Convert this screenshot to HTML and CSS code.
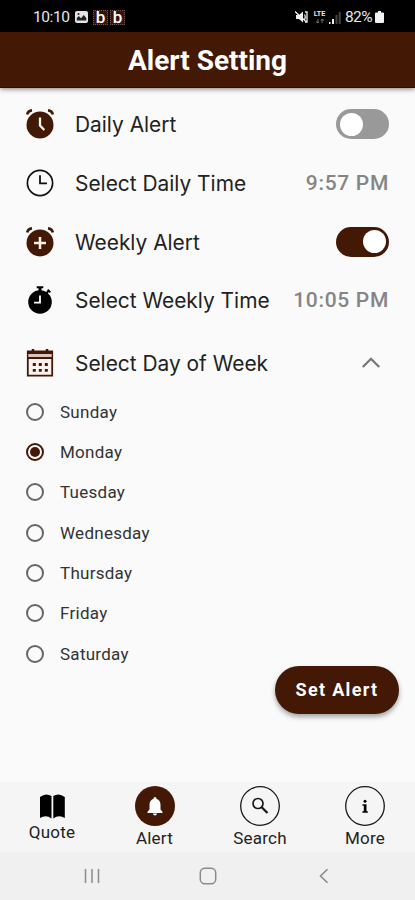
FILE: index.html
```html
<!DOCTYPE html>
<html lang="en">
<head>
<meta charset="utf-8">
<title>Alert Setting</title>
<link rel="stylesheet" href="styles.css">
</head>
<body>
<div class="phone">
  <div class="status">
    <span class="clock">10:10</span>
    <svg class="pic" viewBox="0 0 13 12"><rect width="13" height="12" rx="2" fill="#e4e4e4"/><path d="M1.800 9.500V7l2-2 2.200 2.200L8.800 4l2.500 3v2.500z" fill="#222"/><circle cx="3.500" cy="3" r="1" fill="#222"/></svg>
    <span class="app">b</span><span class="app">b</span>
    <span class="grow"></span>
    <svg class="mute" viewBox="0 0 13 12" fill="none" stroke="#eee" stroke-width="1.300"><path d="M1 4h3l4-3.500v11L4 8H1z" fill="#eee" stroke="none"/><path d="M0 .5l12 11M9.500 3.500q1.500 2.500 0 5M10 1h2v10h-2"/></svg>
    <span class="lte"><b>LTE</b><svg viewBox="0 0 8 4"><path d="M2 0v4M0 2.500l2 1.500 1-1M6 4V0M5 1.500L6 0l2 1.500" stroke="#777" fill="none"/></svg></span>
    <svg class="signal" viewBox="0 0 12 13"><path d="M0 11h1.500v2H0zM3 8h2v5H3z" fill="#eee"/><path d="M6.500 4h2v9h-2zM9.700 1h2v12h-2z" fill="#444"/></svg>
    <span class="pct">82%</span>
    <svg class="battery" viewBox="0 0 9 12"><path d="M3 0h3v1.500h2q1 0 1 1V11q0 1-1 1H1q-1 0-1-1V2.500q0-1 1-1h2z" fill="#f2f2f2"/></svg>
  </div>
  <header class="title">Alert Setting</header>
  <main>
    <div class="row">
      <svg class="icon" viewBox="0 0 28 30"><circle cx="14" cy="16" r="13.500" fill="#431805"/><path d="M1.200 5.500Q1.800 2 6 1.400M26.800 5.500Q26.200 2 22 1.400" stroke="#431805" stroke-width="2.600" fill="none"/><path d="M14 8.500v8l4.300 4.500" stroke="#fff1ea" stroke-width="2.300" fill="none"/></svg>
      <span class="label">Daily Alert</span><span class="switch"></span>
    </div>
    <div class="row">
      <svg class="icon" viewBox="0 0 28 30"><circle cx="14" cy="15" r="12.600" fill="none" stroke="#111" stroke-width="1.700"/><path d="M14 7.200v8.200h7" stroke="#111" stroke-width="1.800" fill="none"/></svg>
      <span class="label">Select Daily Time</span><span class="time">9:57 PM</span>
    </div>
    <div class="row">
      <svg class="icon" viewBox="0 0 28 30"><circle cx="14" cy="16" r="13.500" fill="#431805"/><path d="M1.200 5.500Q1.800 2 6 1.400M26.800 5.500Q26.200 2 22 1.400" stroke="#431805" stroke-width="2.600" fill="none"/><path d="M14 10v12M8 16h12" stroke="#fff1ea" stroke-width="2.500" fill="none"/></svg>
      <span class="label">Weekly Alert</span><span class="switch on"></span>
    </div>
    <div class="row">
      <svg class="icon" viewBox="0 0 28 30"><circle cx="14" cy="17" r="11.800" fill="#000"/><path d="M10.700 1.300h6.600v2h-1.800V7h-3V3.300h-1.800z"/><path d="M20.500 8l2.500-2.500M21.700 4.700l2.600 2.600" stroke="#000" stroke-width="1.900"/><path d="M14 10.500v7.200H8" stroke="#fff" stroke-width="1.800" fill="none"/></svg>
      <span class="label">Select Weekly Time</span><span class="time">10:05 PM</span>
    </div>
    <div class="row fold">
      <svg class="icon" viewBox="0 0 28 30"><path d="M1.800 3.500h24.400v24.200H1.800z" fill="#fbf1ee" stroke="#431805" stroke-width="1.800"/><path d="M1 3h26v3H1zM1 9h26v2H1z" fill="#431805"/><path d="M2.500 6h23v3h-23z" fill="#d8c5be"/><path d="M7 1v4M21 1v4" stroke="#431805" stroke-width="2.500"/><path d="M6.800 16.500h15M6.800 22.300h15" stroke="#431805" stroke-width="2.800" stroke-dasharray="3 3"/></svg>
      <span class="label">Select Day of Week</span>
      <svg class="chev" viewBox="0 0 20 13"><path d="M1.800 11L10 2.800l8.200 8.200" fill="none" stroke="#777" stroke-width="2.300"/></svg>
    </div>
    <div class="days">
      <div class="day"><i class="radio"></i>Sunday</div>
      <div class="day"><i class="radio checked"></i>Monday</div>
      <div class="day"><i class="radio"></i>Tuesday</div>
      <div class="day"><i class="radio"></i>Wednesday</div>
      <div class="day"><i class="radio"></i>Thursday</div>
      <div class="day"><i class="radio"></i>Friday</div>
      <div class="day"><i class="radio"></i>Saturday</div>
    </div>
    <button class="fab">Set Alert</button>
  </main>
  <nav class="tabs">
    <div class="tab quote"><svg class="book" viewBox="0 0 25 25"><path d="M0 3Q5.500-1.500 11.500 2v22.500Q6 20.500 0 24zM13.300 2Q19-1.500 24.800 3v21q-6-3.500-11.500.5z"/></svg><span>Quote</span></div>
    <div class="tab"><svg class="round" viewBox="0 0 40 40"><circle cx="20" cy="20" r="20" fill="#431805"/><path d="M20 11q1.500 0 1.500 1.700Q25.500 14 25.500 19v4.500l2 2.200V27h-15v-1.300l2-2.200V19q0-5 4-6.300Q18.500 11 20 11zM18 27.500h4q0 2-2 2t-2-2z" fill="#fff"/></svg><span>Alert</span></div>
    <div class="tab"><svg class="round" viewBox="0 0 40 40" fill="none" stroke="#181818"><circle cx="20" cy="20" r="19.300" stroke-width="1.300"/><circle cx="18" cy="17.500" r="5" stroke-width="1.700"/><path d="M21.500 21l6 6" stroke-width="2.200"/></svg><span>Search</span></div>
    <div class="tab"><svg class="round" viewBox="0 0 40 40"><circle cx="20" cy="20" r="19.300" fill="none" stroke="#181818" stroke-width="1.300"/><circle cx="20" cy="15.300" r="1.500"/><path d="M17.500 18.200h4v7h1.300v1.500h-5.400v-1.500h1.400v-5.500h-1.300z"/></svg><span>More</span></div>
  </nav>
  <div class="system">
    <svg class="sys" viewBox="0 0 20 20"><path d="M3.500 3v14M10 3v14M16.500 3v14" stroke="#8b8b8b" stroke-width="1.500"/></svg>
    <svg class="sys" viewBox="0 0 20 20"><rect x="2.300" y="2.300" width="15.400" height="15.400" rx="4.500" fill="none" stroke="#8b8b8b" stroke-width="1.500"/></svg>
    <svg class="sys" viewBox="0 0 20 20"><path d="M13.500 3.200L6.500 10l7 6.800" fill="none" stroke="#8b8b8b" stroke-width="1.600"/></svg>
  </div>
</div>
</body>
</html>
```
FILE: styles.css
```css
* { box-sizing: border-box; }
body { margin: 0; background: #fafafa; font-family: Roboto, sans-serif; color: #222; }
svg { display: block; flex: none; }
.phone { width: 415px; height: 900px; display: flex; flex-direction: column; overflow: hidden; }
.status { height: 32px; flex: none; background: #000; color: #e8e8e8; display: flex; align-items: center; padding: 2px 31px 0 33px; font-size: 15.5px; }
.clock { width: 42px; letter-spacing: -.4px; }
.pic { width: 13px; height: 12px; margin-right: 5px; }
.app { width: 15px; height: 15px; margin-right: 2px; background: #32130d; border: 1px dotted #70564e; font: 500 17px/12px Roboto, sans-serif; text-align: center; color: #fff; }
.grow { flex: 1; }
.mute { width: 13px; height: 12px; margin-right: 5px; }
.lte { width: 13px; margin-right: 3px; display: flex; flex-direction: column; align-items: center; gap: 1px; }
.lte b { font-size: 7px; line-height: 7px; }
.lte svg { width: 8px; height: 4px; }
.signal { width: 12px; height: 13px; margin-right: 4px; }
.pct { width: 30px; letter-spacing: -.6px; }
.battery { width: 9px; height: 12px; }
.title { height: 56px; flex: none; display: flex; align-items: center; justify-content: center; padding-top: 2px; background: #431805; border-bottom: 1px solid #2c0c02; color: #fff; font-weight: bold; font-size: 28px; box-shadow: 0 1px 5px rgba(0,0,0,.5); }
main { flex: 1; padding: 7px 26px 0 26px; display: flex; flex-direction: column; }
.row { height: 58.7px; flex: none; display: flex; align-items: center; }
.icon { width: 28px; height: 30px; margin-right: 21px; }
.label { flex: 1; white-space: nowrap; font-family: Inter, sans-serif; font-size: 20.9px; padding-top: 1px; }
.time { font-size: 21px; font-weight: 500; letter-spacing: .7px; color: #858585; white-space: nowrap; }
.switch { width: 53px; height: 30px; border-radius: 15px; padding: 3.5px; background: #999; display: flex; }
.switch::before { content: ""; width: 23px; height: 23px; border-radius: 50%; background: #fff; }
.switch.on { background: #431805; justify-content: flex-end; }
.fold { height: 56px; margin-top: 5px; }
.chev { width: 20px; height: 13px; margin-right: 8px; }
.days { padding-top: .8px; }
.day { height: 40.35px; display: flex; align-items: center; font-size: 17px; letter-spacing: .27px; color: #333; }
.radio { width: 18px; height: 18px; border: 2px solid #666; border-radius: 50%; margin-right: 16px; display: flex; align-items: center; justify-content: center; }
.radio.checked { border-color: #431805; }
.radio.checked::before { content: ""; width: 10px; height: 10px; border-radius: 50%; background: #431805; }
.fab { align-self: flex-end; flex: none; margin: -8px -10px 0 0; width: 124px; height: 48px; border: 0; border-radius: 24px; background: #431805; color: #fff; font: bold 18px Roboto, sans-serif; letter-spacing: 1.3px; box-shadow: 0 3px 5px rgba(0,0,0,.35); }
.tabs { height: 70px; flex: none; background: #f5f5f5; display: grid; grid-template-columns: 104px 101px 110px 100px; padding-top: 4px; }
.tab { display: flex; flex-direction: column; align-items: center; font-size: 17px; letter-spacing: .25px; line-height: 20px; }
.round { width: 40px; height: 40px; }
.tab span { margin-top: 1.5px; }
.quote { padding-top: 8px; }
.quote span { margin-top: 3px; }
.book { width: 25px; height: 25px; }
.system { height: 48px; flex: none; background: #f0f0f0; display: flex; align-items: center; justify-content: space-between; padding: 0 81px 0 82px; }
.sys { width: 20px; height: 20px; }
```
